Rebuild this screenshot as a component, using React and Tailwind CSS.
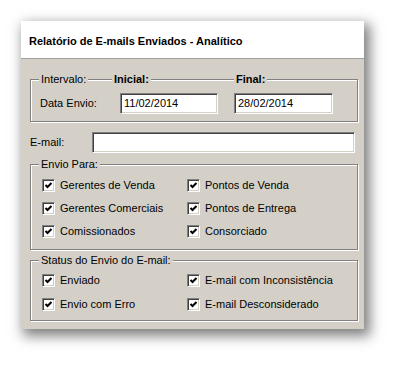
import React from "react";

const etched =
  "relative border border-[#808080] shadow-[inset_1px_1px_0_#ffffff,1px_1px_0_#ffffff]";

const sunken =
  "bg-white border border-t-[#808080] border-l-[#808080] border-b-white border-r-white shadow-[inset_1px_1px_0_#404040,inset_-1px_-1px_0_#d4d0c8]";

function Legend({ left, bold, children }) {
  return (
    <span
      className={`absolute top-[-8px] px-[2px] bg-[#d4d0c8] leading-[14px] ${
        bold ? "font-bold" : ""
      }`}
      style={{ left }}
    >
      {children}
    </span>
  );
}

function TextBox({ value, width }) {
  return (
    <div
      className={`${sunken} h-[21px] flex items-center pl-[3px] leading-none`}
      style={{ width }}
    >
      {value}
    </div>
  );
}

function Check({ label }) {
  return (
    <div className="flex items-center h-[13px]">
      <span className={`${sunken} w-[13px] h-[13px] shrink-0 flex items-center justify-center`}>
        <svg width="9" height="9" viewBox="0 0 9 9">
          <path d="M1.5 4 L3.5 6 L7.5 2" fill="none" stroke="#000" strokeWidth="2" />
        </svg>
      </span>
      <span className="ml-[5px] whitespace-nowrap">{label}</span>
    </div>
  );
}

export default function App() {
  return (
    <div
      className="w-[406px] h-[373px] bg-white overflow-hidden pt-[21px] pl-[21px] text-[11px] text-black"
      style={{ fontFamily: '"Liberation Sans", Arial, sans-serif' }}
    >
      <div className="w-[343px] shadow-[4px_5px_12px_2px_rgba(0,0,0,0.5)]">
        {/* header */}
        <div className="h-[38px] bg-white border-b border-[#a0a0a0] flex items-center pl-[8px] pt-[4px]">
          <span className="font-bold text-[11px]">
            Relatório de E-mails Enviados - Analítico
          </span>
        </div>

        {/* body */}
        <div className="h-[270px] bg-[#d4d0c8] pl-[9px] pr-[6px] pt-[20px]">
          {/* Intervalo */}
          <div className={`${etched} h-[43px]`}>
            <Legend left={8}>Intervalo:</Legend>
            <Legend left={81} bold>
              Inicial:
            </Legend>
            <Legend left={203} bold>
              Final:
            </Legend>
            <div className="flex items-center pt-[13px] pl-[9px]">
              <span className="w-[80px]">Data Envio:</span>
              <TextBox value="11/02/2014" width={98} />
              <div className="w-[16px]" />
              <TextBox value="28/02/2014" width={99} />
            </div>
          </div>

          {/* E-mail */}
          <div className="flex items-center mt-[10px] pr-[1px]">
            <span className="w-[62px]">E-mail:</span>
            <TextBox value="" width={263} />
          </div>

          {/* Envio Para */}
          <div className={`${etched} h-[86px] mt-[11px]`}>
            <Legend left={8}>Envio Para:</Legend>
            <div className="grid grid-cols-[145px_1fr] gap-y-[10px] pl-[11px] pt-[14px]">
              <Check label="Gerentes de Venda" />
              <Check label="Pontos de Venda" />
              <Check label="Gerentes Comerciais" />
              <Check label="Pontos de Entrega" />
              <Check label="Comissionados" />
              <Check label="Consorciado" />
            </div>
          </div>

          {/* Status */}
          <div className={`${etched} h-[61px] mt-[10px]`}>
            <Legend left={8}>Status do Envio do E-mail:</Legend>
            <div className="grid grid-cols-[145px_1fr] gap-y-[11px] pl-[11px] pt-[13px]">
              <Check label="Enviado" />
              <Check label="E-mail com Inconsistência" />
              <Check label="Envio com Erro" />
              <Check label="E-mail Desconsiderado" />
            </div>
          </div>
        </div>
      </div>
    </div>
  );
}
